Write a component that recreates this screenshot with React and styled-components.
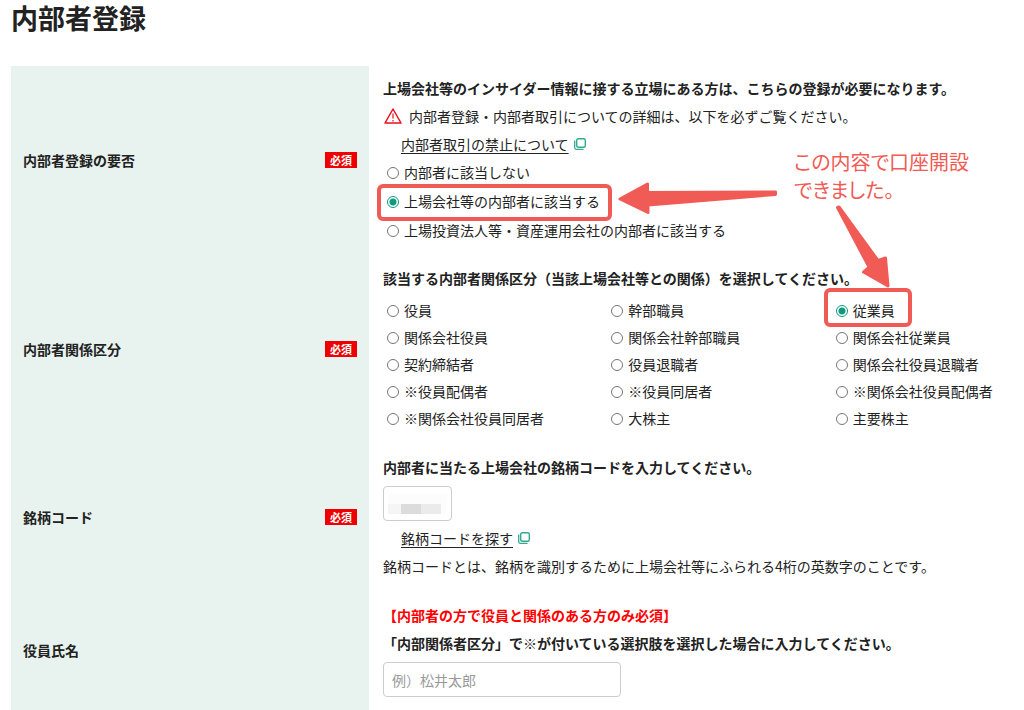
import React from 'react';
import styled, { createGlobalStyle } from 'styled-components';

const GlobalStyle = createGlobalStyle`
	* {
		box-sizing: border-box;
	}
	body {
		margin: 0;
		background: #fff;
		color: #222;
		font-family: 'Noto Sans CJK JP', 'Liberation Sans', sans-serif;
		font-size: 14px;
		line-height: 28px;
	}
`;

const Page = styled.main`
	position: relative;
	padding-left: 11px;
`;

const Title = styled.h1`
	margin: 0 0 30px;
	font-size: 27px;
	line-height: 36px;
`;

const FormRow = styled.div`
	display: grid;
	grid-template-columns: 358px 1fr;
`;

const RowHead = styled.div`
	display: flex;
	align-items: center;
	justify-content: space-between;
	padding: 0 12px;
	background: #e8f3ef;
	font-weight: bold;
`;

const Required = styled.span`
	padding: 0 5px;
	background: #e00;
	color: #fff;
	font-size: 11px;
	line-height: 16px;
`;

const RowBody = styled.div`
	padding: ${props => props.$top}px 0 ${props => props.$bottom}px 14px;
`;

const Text = styled.p`
	margin: 0;
`;

const Lead = styled(Text)`
	font-weight: bold;
	color: ${props => (props.$alert ? '#f00' : 'inherit')};
`;

const Notice = styled(Text)`
	display: flex;
	align-items: center;
	gap: 7px;
	padding-left: 1px;
`;

const LinkLine = styled(Text)`
	display: flex;
	align-items: center;
	gap: 5px;
	padding-left: 18px;
`;

const TextLink = styled.a`
	color: inherit;
	text-underline-offset: 3px;
`;

const Options = styled.div`
	display: flex;
	flex-direction: column;
	align-items: flex-start;
	line-height: 29px;
`;

const OptionGrid = styled.div`
	display: grid;
	grid-template-columns: 35% 35% 1fr;
	justify-items: start;
	margin-top: 5px;
	line-height: 27px;
`;

const OptionLabel = styled.label`
	position: relative;
	display: flex;
	align-items: center;
	gap: 5px;
	padding-left: 4px;
	white-space: nowrap;
`;

const Radio = styled.input`
	appearance: none;
	width: 12px;
	height: 12px;
	margin: 0;
	border: 1px solid #767676;
	border-radius: 50%;
	background: #fff;
	&:checked {
		border-color: #0b9a80;
		background: radial-gradient(circle, #0b9a80 3px, #fff 4px);
	}
`;

// red frame drawn round an option
const Frame = styled.span`
	position: absolute;
	inset: ${props => props.$inset};
	border: 4px solid #f15b55;
	border-radius: 6px;
	pointer-events: none;
`;

const Field = styled.div`
	position: relative;
	width: ${props => props.$width}px;
	margin: 5px 0 ${props => props.$after || 0}px;
`;

const TextBox = styled.input`
	display: block;
	width: 100%;
	height: 35px;
	padding: 0 8px;
	border: 1px solid #ccc;
	border-radius: 4px;
	background: #fff;
	color: inherit;
	font: inherit;
	&::placeholder {
		color: #999;
	}
`;

const Mosaic = styled.div`
	position: absolute;
	left: 5px;
	top: 8px;
	display: grid;
	grid-template-columns: 13px 20px 20px 6px;
	grid-template-rows: 10px 10px;
	background: #fcfcfc;
	pointer-events: none;
`;

const Block = styled.span`
	grid-row: 2;
	background: ${props => props.$color};
`;

const Annotation = styled.div`
	position: absolute;
	left: 610px;
	top: 140px;
	color: #f15b55;
	pointer-events: none;
`;

const Arrows = styled.svg`
	display: block;
	fill: currentColor;
	stroke: currentColor;
	stroke-width: 3;
	stroke-linejoin: round;
`;

const Comment = styled.p`
	position: absolute;
	left: 184px;
	top: 8px;
	margin: 0;
	font-size: 20px;
	font-feature-settings: 'palt';
	white-space: nowrap;
`;

const WarningIcon = () => (
	<svg width="18" height="16" viewBox="0 0 18 16" fill="none" stroke="#e8101c" strokeWidth="1.5" strokeLinejoin="round" aria-hidden="true">
		<path d="M9 1 17 15H1Z" />
		<path d="M9 5.500v5M9 12v1.500" strokeWidth="1.2" />
	</svg>
);

const WindowIcon = () => (
	<svg width="12" height="12" viewBox="0 0 12 12" fill="none" stroke="#35a892" aria-hidden="true">
		<rect x="2.700" y="0.700" width="8.600" height="8.600" rx="1.500" strokeWidth="1.4" />
		<path d="M0.700 2.500v7.300a1.500 1.500 0 0 0 1.500 1.500h7.300" strokeWidth="1.3" />
	</svg>
);

const needs = [
	{ label: '内部者に該当しない' },
	{ label: '上場会社等の内部者に該当する', checked: true, frame: '-3px -12px -5px -6px' },
	{ label: '上場投資法人等・資産運用会社の内部者に該当する' }
];

const relations = [
	{ label: '役員' },
	{ label: '幹部職員' },
	{ label: '従業員', checked: true, frame: '-9px -17px -3px -8px' },
	{ label: '関係会社役員' },
	{ label: '関係会社幹部職員' },
	{ label: '関係会社従業員' },
	{ label: '契約締結者' },
	{ label: '役員退職者' },
	{ label: '関係会社役員退職者' },
	{ label: '※役員配偶者' },
	{ label: '※役員同居者' },
	{ label: '※関係会社役員配偶者' },
	{ label: '※関係会社役員同居者' },
	{ label: '大株主' },
	{ label: '主要株主' }
];

const Option = ({ name, option }) => (
	<OptionLabel>
		<Radio type="radio" name={name} value={option.label} defaultChecked={option.checked} />
		{option.label}
		{option.frame && <Frame $inset={option.frame} />}
	</OptionLabel>
);

const Row = ({ title, htmlFor, required, top, bottom, children }) => (
	<FormRow>
		<RowHead>
			{htmlFor ? <label htmlFor={htmlFor}>{title}</label> : <span>{title}</span>}
			{required && <Required>必須</Required>}
		</RowHead>
		<RowBody $top={top} $bottom={bottom}>
			{children}
		</RowBody>
	</FormRow>
);

const App = () => (
	<Page>
		<GlobalStyle />
		<Title>内部者登録</Title>
		<form>
			<Row title="内部者登録の要否" required top={8} bottom={8}>
				<Lead>上場会社等のインサイダー情報に接する立場にある方は、こちらの登録が必要になります。</Lead>
				<Notice>
					<WarningIcon />
					内部者登録・内部者取引についての詳細は、以下を必ずご覧ください。
				</Notice>
				<LinkLine>
					<TextLink href="#insider">内部者取引の禁止について</TextLink>
					<WindowIcon />
				</LinkLine>
				<Options role="radiogroup" aria-label="内部者登録の要否">
					{needs.map(option => (
						<Option key={option.label} name="need" option={option} />
					))}
				</Options>
			</Row>
			<Row title="内部者関係区分" required top={11} bottom={13}>
				<Lead>該当する内部者関係区分（当該上場会社等との関係）を選択してください。</Lead>
				<OptionGrid role="radiogroup" aria-label="内部者関係区分">
					{relations.map(option => (
						<Option key={option.label} name="relation" option={option} />
					))}
				</OptionGrid>
			</Row>
			<Row title="銘柄コード" htmlFor="code" required top={8} bottom={9}>
				<Lead>内部者に当たる上場会社の銘柄コードを入力してください。</Lead>
				<Field $width={69} $after={3}>
					<TextBox id="code" type="text" />
					<Mosaic>
						<Block $color="#f5f5f5" />
						<Block $color="#dcdcdc" />
						<Block $color="#ebebeb" />
					</Mosaic>
				</Field>
				<LinkLine>
					<TextLink href="#search">銘柄コードを探す</TextLink>
					<WindowIcon />
				</LinkLine>
				<Text>銘柄コードとは、銘柄を識別するために上場会社等にふられる4桁の英数字のことです。</Text>
			</Row>
			<Row title="役員氏名" htmlFor="officer" top={12} bottom={13}>
				<Lead $alert>【内部者の方で役員と関係のある方のみ必須】</Lead>
				<Lead>「内部関係者区分」で※が付いている選択肢を選択した場合に入力してください。</Lead>
				<Field $width={238}>
					<TextBox id="officer" type="text" placeholder="例）松井太郎" />
				</Field>
			</Row>
		</form>
		<Annotation>
			<Arrows width="290" height="152" viewBox="610 140 290 152" aria-hidden="true">
				<path d="M620 199 647.500 184V192.500L775.500 192V194.500L648 205V212.500Z" />
				<path d="M837.500 207.500 839 207 878 260.500 885.500 258 888 286 863.500 272 869 267Z" />
			</Arrows>
			<Comment>
				この内容で口座開設
				<br />
				できました。
			</Comment>
		</Annotation>
	</Page>
);

export default App;
